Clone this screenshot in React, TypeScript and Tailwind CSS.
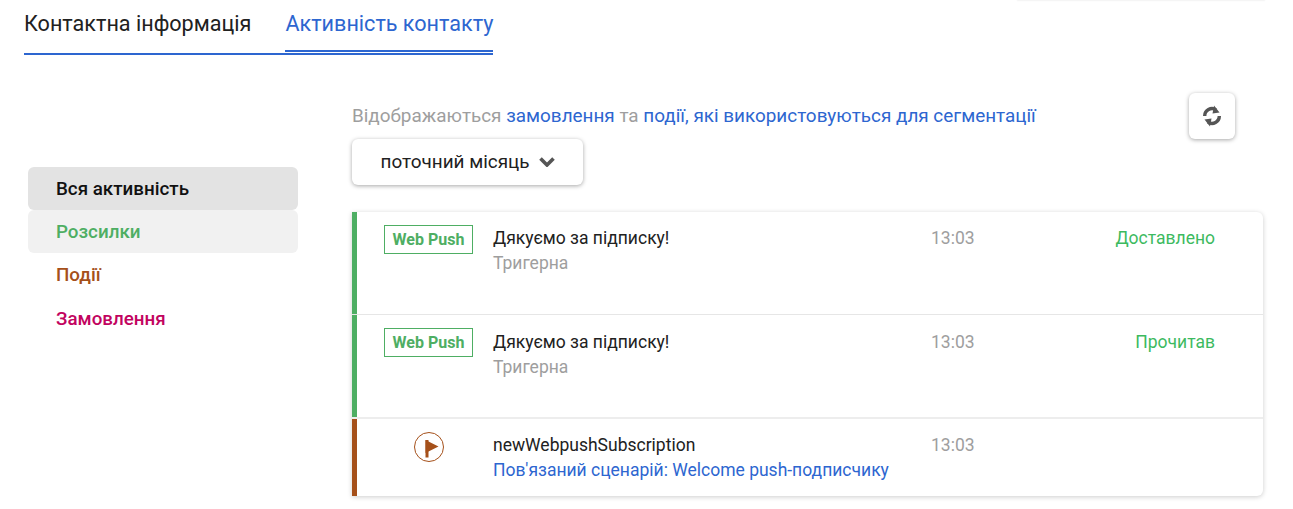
type Row = {
  title: string;
  sub: string;
  time: string;
  status?: string;
  kind: "push" | "event";
};

const rows: Row[] = [
  { kind: "push", title: "Дякуємо за підписку!", sub: "Тригерна", time: "13:03", status: "Доставлено" },
  { kind: "push", title: "Дякуємо за підписку!", sub: "Тригерна", time: "13:03", status: "Прочитав" },
  { kind: "event", title: "newWebpushSubscription", sub: "Пов'язаний сценарій: Welcome push-подписчику", time: "13:03" },
];

function FlagIcon() {
  return (
    <span className="ml-[30px] flex h-[30px] w-[30px] items-center justify-center rounded-full border border-[#a5501a]">
      <svg width="14" height="18" viewBox="0 0 14 18" fill="#a5501a" className="ml-[5px] mt-[4px]">
        <rect x="0.5" y="0" width="3" height="17.5" />
        <path d="M0.5 0 L13.5 6.5 L0.5 13 Z" />
      </svg>
    </span>
  );
}

function SyncIcon() {
  return (
    <svg width="18" height="22" viewBox="0 0 18 22" fill="none" className="text-[#555555]">
      <g stroke="currentColor" fill="none" strokeWidth="3.4">
        <path d="M1.7 11 A7.3 7.3 0 0 1 13 4.8" />
        <path d="M16.3 11 A7.3 7.3 0 0 1 5 17.2" />
      </g>
      <g fill="currentColor">
        <path d="M11 0.5 L16.5 7.5 L9.5 8.5 Z" />
        <path d="M7 21.5 L1.5 14.5 L8.5 13.5 Z" />
      </g>
    </svg>
  );
}

function ActivityRow({ row, index }: { row: Row; index: number }) {
  const isPush = row.kind === "push";
  const textTop = index === 1 ? "pt-[2px]" : "pt-px";
  return (
    <>
      <div
        className={`flex border-l-[5px] pt-[13px] ${isPush ? "h-[102px] border-l-[#4eae63]" : "h-[77px] border-l-[#a5501a]"}`}
      >
        <div className="flex w-[136px] shrink-0 pl-[27px]">
          {isPush ? (
            <span className="flex h-[29px] w-[89px] items-center justify-center border border-[#4eae63] text-base font-bold text-[#4eae63]">
              Web Push
            </span>
          ) : (
            <FlagIcon />
          )}
        </div>
        <div className={`w-[439px] shrink-0 text-[17.5px] leading-[25px] ${textTop}`}>
          <div className="text-[#212121]">{row.title}</div>
          <div className={isPush ? "text-[#9e9e9e]" : "text-[#2d66d0]"}>{row.sub}</div>
        </div>
        <div className={`w-[100px] shrink-0 -translate-x-px text-[17.5px] leading-[25px] text-[#9e9e9e] ${textTop}`}>
          {row.time}
        </div>
        <div className={`w-[183px] shrink-0 text-right text-[17.5px] leading-[25px] text-[#3dba5f] ${textTop}`}>
          {row.status}
        </div>
      </div>
      {index === 0 && <div className="h-px bg-[#e6e6e6]" />}
      {index === 1 && <div className="h-[2px] bg-[#ededed]" />}
    </>
  );
}

export default function App() {
  return (
    <div className="relative h-[509px] w-[1293px] overflow-hidden bg-white font-['Roboto',sans-serif]">
      {/* leftover of the block above */}
      <div className="absolute left-[1017px] top-[-1px] h-[1px] w-[248px] bg-white shadow-[0_0_2px_rgba(0,0,0,0.2)]" />

      {/* Tabs */}
      <div className="ml-6 flex h-[55px] w-[469px] gap-[34px] whitespace-nowrap border-b-2 border-[#2d66d0] text-[21.6px] leading-[47px]">
        <div className="text-[#212121]">Контактна інформація</div>
        <div className="h-[52px] border-b-2 border-[#2d66d0] text-[#2d66d0]">Активність контакту</div>
      </div>

      <div className="flex">
        {/* Side menu */}
        <div className="ml-7 mt-[112px] w-[270px] shrink-0 text-[18.8px] font-medium">
          <div className="flex h-[43px] items-center rounded-md bg-[#e3e3e3] pl-7 pt-[2px] text-[#111111]">Вся активність</div>
          <div className="flex h-[43px] items-center rounded-md bg-[#f1f1f1] pl-7 pt-[2px] text-[#4eae63]">Розсилки</div>
          <div className="flex h-[43px] items-center pl-7 pt-[2px] text-[#a5501a]">Події</div>
          <div className="flex h-[44px] items-center pl-7 pt-[2px] text-[#c2045f]">Замовлення</div>
        </div>

        {/* Main */}
        <div className="ml-[54px] w-[911px]">
          <div className="flex h-[84px] justify-between pr-7 pt-[38px]">
            <div className="text-[18.9px] leading-[46px] text-[#9e9e9e]">
              Відображаються <span className="text-[#2d66d0]">замовлення</span> та{" "}
              <span className="text-[#2d66d0]">події, які використовуються для сегментації</span>
            </div>
            <div className="flex h-[46px] w-[46px] items-center justify-center rounded-md bg-white shadow-[0_1px_4px_rgba(0,0,0,0.35)]">
              <SyncIcon />
            </div>
          </div>
          <div className="flex h-[46px] w-[231px] items-center justify-center gap-[10px] rounded-md bg-white pl-px text-[18.9px] text-[#212121] shadow-[0_1px_4px_rgba(0,0,0,0.35)]">
            поточний місяць
            <svg width="16" height="10" viewBox="0 0 16 10" fill="none" stroke="#555555" strokeWidth="3.6">
              <path d="M1.5 1.5 L8 8 L14.5 1.5" />
            </svg>
          </div>
          <div className="mt-[27px] rounded-r-md bg-white shadow-[0_1px_5px_rgba(0,0,0,0.2)]">
            {rows.map((row, i) => (
              <ActivityRow key={i} row={row} index={i} />
            ))}
          </div>
        </div>
      </div>
    </div>
  );
}
